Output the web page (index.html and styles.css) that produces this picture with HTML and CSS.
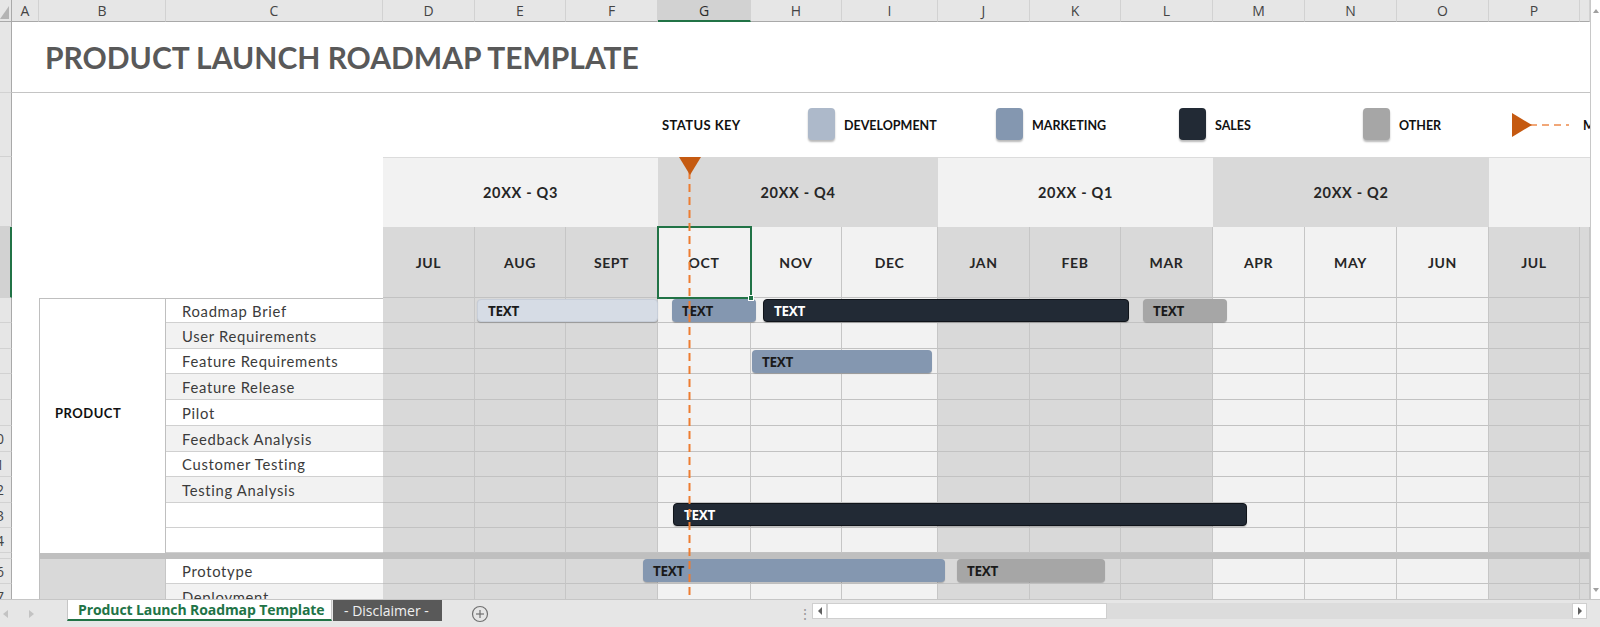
FILE: index.html
```html
<!DOCTYPE html>
<html>
<head>
<meta charset="utf-8">
<title>Product Launch Roadmap Template</title>
<link rel="stylesheet" href="styles.css">
</head>
<body>
<div class="app">
  <div class="main">
    <div class="sheet">
      <div class="row hdr">
        <div class="corner"><svg width="11" height="21" viewBox="0 0 11 21"><polygon points="9,6 9,19 0,19" fill="#b4b4b4"/></svg></div>
        <div class="ch">A</div><div class="ch">B</div><div class="ch">C</div><div class="ch">D</div><div class="ch">E</div><div class="ch">F</div><div class="ch sel">G</div><div class="ch">H</div><div class="ch">I</div><div class="ch">J</div><div class="ch">K</div><div class="ch">L</div><div class="ch">M</div><div class="ch">N</div><div class="ch">O</div><div class="ch">P</div><div class="ch"></div>
      </div>

      <div class="row r-title">
        <div class="rh"><span>1</span></div>
        <div class="title-cell"><h1 class="title">PRODUCT LAUNCH ROADMAP TEMPLATE</h1></div>
      </div>

      <div class="row r-status">
        <div class="rh"><span>2</span></div>
        <div class="blank span-af"></div>
        <div class="sk">STATUS KEY</div>
        <div class="sw-cell"><span class="sw sw-dev"></span></div>
        <div class="lbl">DEVELOPMENT</div>
        <div class="sw-cell"><span class="sw sw-mkt"></span></div>
        <div class="lbl">MARKETING</div>
        <div class="sw-cell"><span class="sw sw-sales"></span></div>
        <div class="lbl">SALES</div>
        <div class="sw-cell"><span class="sw sw-other"></span></div>
        <div class="lbl">OTHER</div>
        <div class="ms-cell"><svg width="60" height="24" viewBox="0 0 60 24"><line x1="18" y1="12" x2="57" y2="12" stroke="#ed8a4c" stroke-width="1.5" stroke-dasharray="7 5"/><polygon points="0,0 20,12 0,24" fill="#c55a11"/></svg></div>
        <div class="lbl lbl-clip">MILESTONE</div>
      </div>

      <div class="row r-quarter">
        <div class="rh"><span>3</span></div>
        <div class="blank span-ac"></div>
        <div class="q lt span3">20XX - Q3</div>
        <div class="q dk span3">20XX - Q4</div>
        <div class="q lt span3">20XX - Q1</div>
        <div class="q dk span3">20XX - Q2</div>
        <div class="q lt span2"></div>
      </div>

      <div class="row r-month">
        <div class="rh rh-sel"><span>4</span></div>
        <div class="blank span-ac"></div>
        <div class="mh dk">JUL</div><div class="mh dk">AUG</div><div class="mh dk">SEPT</div>
        <div class="mh lt">OCT</div><div class="mh lt">NOV</div><div class="mh lt">DEC</div>
        <div class="mh dk">JAN</div><div class="mh dk">FEB</div><div class="mh dk">MAR</div>
        <div class="mh lt">APR</div><div class="mh lt">MAY</div><div class="mh lt">JUN</div>
        <div class="mh dk">JUL</div><div class="mh dk"></div>
      </div>

      <div class="row h25">
        <div class="rh"><span>5</span></div><div class="ca"></div><div class="cb top"></div><div class="cc top">Roadmap Brief</div>
        <i class="m dk"></i><i class="m dk"></i><i class="m dk"></i><i class="m lt"></i><i class="m lt"></i><i class="m lt"></i><i class="m dk"></i><i class="m dk"></i><i class="m dk"></i><i class="m lt"></i><i class="m lt"></i><i class="m lt"></i><i class="m dk"></i><i class="m dk"></i>
      </div>
      <div class="row h26">
        <div class="rh"><span>6</span></div><div class="ca"></div><div class="cb"></div><div class="cc alt">User Requirements</div>
        <i class="m dk"></i><i class="m dk"></i><i class="m dk"></i><i class="m lt"></i><i class="m lt"></i><i class="m lt"></i><i class="m dk"></i><i class="m dk"></i><i class="m dk"></i><i class="m lt"></i><i class="m lt"></i><i class="m lt"></i><i class="m dk"></i><i class="m dk"></i>
      </div>
      <div class="row h25">
        <div class="rh"><span>7</span></div><div class="ca"></div><div class="cb"></div><div class="cc">Feature Requirements</div>
        <i class="m dk"></i><i class="m dk"></i><i class="m dk"></i><i class="m lt"></i><i class="m lt"></i><i class="m lt"></i><i class="m dk"></i><i class="m dk"></i><i class="m dk"></i><i class="m lt"></i><i class="m lt"></i><i class="m lt"></i><i class="m dk"></i><i class="m dk"></i>
      </div>
      <div class="row h26">
        <div class="rh"><span>8</span></div><div class="ca"></div><div class="cb"></div><div class="cc alt">Feature Release</div>
        <i class="m dk"></i><i class="m dk"></i><i class="m dk"></i><i class="m lt"></i><i class="m lt"></i><i class="m lt"></i><i class="m dk"></i><i class="m dk"></i><i class="m dk"></i><i class="m lt"></i><i class="m lt"></i><i class="m lt"></i><i class="m dk"></i><i class="m dk"></i>
      </div>
      <div class="row h26">
        <div class="rh"><span>9</span></div><div class="ca"></div><div class="cb group">PRODUCT</div><div class="cc">Pilot</div>
        <i class="m dk"></i><i class="m dk"></i><i class="m dk"></i><i class="m lt"></i><i class="m lt"></i><i class="m lt"></i><i class="m dk"></i><i class="m dk"></i><i class="m dk"></i><i class="m lt"></i><i class="m lt"></i><i class="m lt"></i><i class="m dk"></i><i class="m dk"></i>
      </div>
      <div class="row h26">
        <div class="rh"><span>10</span></div><div class="ca"></div><div class="cb"></div><div class="cc alt">Feedback Analysis</div>
        <i class="m dk"></i><i class="m dk"></i><i class="m dk"></i><i class="m lt"></i><i class="m lt"></i><i class="m lt"></i><i class="m dk"></i><i class="m dk"></i><i class="m dk"></i><i class="m lt"></i><i class="m lt"></i><i class="m lt"></i><i class="m dk"></i><i class="m dk"></i>
      </div>
      <div class="row h25">
        <div class="rh"><span>11</span></div><div class="ca"></div><div class="cb"></div><div class="cc">Customer Testing</div>
        <i class="m dk"></i><i class="m dk"></i><i class="m dk"></i><i class="m lt"></i><i class="m lt"></i><i class="m lt"></i><i class="m dk"></i><i class="m dk"></i><i class="m dk"></i><i class="m lt"></i><i class="m lt"></i><i class="m lt"></i><i class="m dk"></i><i class="m dk"></i>
      </div>
      <div class="row h26">
        <div class="rh"><span>12</span></div><div class="ca"></div><div class="cb"></div><div class="cc alt">Testing Analysis</div>
        <i class="m dk"></i><i class="m dk"></i><i class="m dk"></i><i class="m lt"></i><i class="m lt"></i><i class="m lt"></i><i class="m dk"></i><i class="m dk"></i><i class="m dk"></i><i class="m lt"></i><i class="m lt"></i><i class="m lt"></i><i class="m dk"></i><i class="m dk"></i>
      </div>
      <div class="row h25">
        <div class="rh"><span>13</span></div><div class="ca"></div><div class="cb"></div><div class="cc"></div>
        <i class="m dk"></i><i class="m dk"></i><i class="m dk"></i><i class="m lt"></i><i class="m lt"></i><i class="m lt"></i><i class="m dk"></i><i class="m dk"></i><i class="m dk"></i><i class="m lt"></i><i class="m lt"></i><i class="m lt"></i><i class="m dk"></i><i class="m dk"></i>
      </div>
      <div class="row h25">
        <div class="rh"><span>14</span></div><div class="ca"></div><div class="cb"></div><div class="cc"></div>
        <i class="m dk"></i><i class="m dk"></i><i class="m dk"></i><i class="m lt"></i><i class="m lt"></i><i class="m lt"></i><i class="m dk"></i><i class="m dk"></i><i class="m dk"></i><i class="m lt"></i><i class="m lt"></i><i class="m lt"></i><i class="m dk"></i><i class="m dk"></i>
      </div>
      <div class="row h6">
        <div class="rh"><span></span></div><div class="ca"></div><div class="sep"></div>
      </div>
      <div class="row h25">
        <div class="rh"><span>16</span></div><div class="ca"></div><div class="cb gray"></div><div class="cc">Prototype</div>
        <i class="m dk"></i><i class="m dk"></i><i class="m dk"></i><i class="m lt"></i><i class="m lt"></i><i class="m lt"></i><i class="m dk"></i><i class="m dk"></i><i class="m dk"></i><i class="m lt"></i><i class="m lt"></i><i class="m lt"></i><i class="m dk"></i><i class="m dk"></i>
      </div>
      <div class="row h26">
        <div class="rh"><span>17</span></div><div class="ca"></div><div class="cb gray"></div><div class="cc alt">Deployment</div>
        <i class="m dk"></i><i class="m dk"></i><i class="m dk"></i><i class="m lt"></i><i class="m lt"></i><i class="m lt"></i><i class="m dk"></i><i class="m dk"></i><i class="m dk"></i><i class="m lt"></i><i class="m lt"></i><i class="m lt"></i><i class="m dk"></i><i class="m dk"></i>
      </div>

      <div class="overlay">
        <div class="bar dev" style="left:477px;top:299px;width:181px">TEXT</div>
        <div class="bar mkt" style="left:672px;top:299px;width:84px">TEXT</div>
        <div class="bar sales" style="left:763px;top:299px;width:366px">TEXT</div>
        <div class="bar other" style="left:1143px;top:299px;width:84px">TEXT</div>
        <div class="bar mkt" style="left:752px;top:350px;width:180px">TEXT</div>
        <div class="bar sales" style="left:673px;top:503px;width:574px">TEXT</div>
        <div class="bar mkt" style="left:643px;top:559px;width:302px">TEXT</div>
        <div class="bar other" style="left:957px;top:559px;width:148px">TEXT</div>
        <div class="selbox"><i class="handle"></i></div>
        <svg class="milestone" width="24" height="442" viewBox="0 0 24 442"><line x1="11.5" y1="14" x2="11.5" y2="442" stroke="#ed7d31" stroke-width="2" stroke-dasharray="8 5"/><polygon points="1,0 23,0 12,18" fill="#c55a11"/></svg>
      </div>
    </div>
    <div class="vscroll">
      <svg class="vs-up" width="10" height="10" viewBox="0 0 10 10"><polygon points="5,3 8,7 2,7" fill="#a0a0a0"/></svg>
      <svg class="vs-down" width="10" height="10" viewBox="0 0 10 10"><polygon points="5,7 8,3 2,3" fill="#a0a0a0"/></svg>
    </div>
  </div>

  <div class="tabbar">
    <div class="tabnav">
      <svg width="8" height="10" viewBox="0 0 8 10"><polygon points="6,1 6,9 1,5" fill="#c3c3c3"/></svg>
      <svg width="8" height="10" viewBox="0 0 8 10"><polygon points="2,1 2,9 7,5" fill="#c3c3c3"/></svg>
    </div>
    <div class="tab tab-active">Product Launch Roadmap Template</div>
    <div class="tab tab-dark">- Disclaimer -</div>
    <div class="addsheet"><svg width="18" height="18" viewBox="0 0 18 18"><circle cx="9" cy="9" r="7.5" fill="none" stroke="#707070" stroke-width="1.2"/><line x1="9" y1="5" x2="9" y2="13" stroke="#707070" stroke-width="1.2"/><line x1="5" y1="9" x2="13" y2="9" stroke="#707070" stroke-width="1.2"/></svg></div>
    <div class="tabspace"></div>
    <div class="dots">⋮</div>
    <div class="hscroll">
      <div class="hs-btn"><svg width="6" height="8" viewBox="0 0 6 8"><polygon points="5,0 5,8 1,4" fill="#606060"/></svg></div>
      <div class="hs-thumb"></div>
      <div class="hs-track"></div>
      <div class="hs-btn"><svg width="6" height="8" viewBox="0 0 6 8"><polygon points="1,0 1,8 5,4" fill="#606060"/></svg></div>
    </div>
  </div>
</div>
</body>
</html>
```

FILE: styles.css
```css
* { box-sizing: border-box; margin: 0; padding: 0; }
html, body { width: 1600px; height: 627px; overflow: hidden; background: #fff; }
body { font-family: "Lato", "Open Sans", sans-serif; color: #262626; }

.app { width: 1600px; height: 627px; display: flex; flex-direction: column; }
.main { display: flex; height: 599px; }
.sheet { position: relative; width: 1590px; height: 599px; overflow: hidden; }

.row {
  display: grid;
  grid-template-columns: 12px 27px 127px 217px 92px 91px 92px 93px 91px 96px 92px 91px 92px 92px 92px 92px 91px 10px;
}
.hdr { height: 22px; }
.r-title { height: 71px; }
.r-status { height: 64px; }
.r-quarter { height: 70px; }
.r-month { height: 71px; }
.h25 { height: 25px; }
.h26 { height: 26px; }
.h6 { height: 6px; }

/* column headers */
.corner { background: #e6e6e6; border-right: 1px solid #a9a9a9; border-bottom: 1px solid #a9a9a9; display: flex; align-items: flex-end; }
.ch {
  background: #e6e6e6; border-right: 1px solid #d2d2d2; border-bottom: 1px solid #a9a9a9;
  display: flex; align-items: center; justify-content: center;
  font: 14px "Open Sans", sans-serif; color: #444;
}
.ch.sel { background: #d2d2d2; border-bottom: 2px solid #217346; color: #2b2b2b; }

/* row headers */
.rh {
  background: #e6e6e6; border-right: 1px solid #a9a9a9; border-bottom: 1px solid #d2d2d2;
  overflow: hidden; display: flex; align-items: center;
  font: 14px "Open Sans", sans-serif; color: #444;
}
.rh span { display: block; flex: none; width: 30px; margin-left: -19px; text-align: center; white-space: nowrap; }
.rh-sel { background: #d2d2d2; border-right: 2px solid #217346; }

/* title */
.title-cell { grid-column: 2 / -1; border-bottom: 1px solid #c4c4c4; display: flex; align-items: center; padding-left: 33px; }
.title { font: 700 30px "Lato", sans-serif; color: #595959; letter-spacing: 0; }

/* status key */
.span-af { grid-column: 2 / 8; }
.span-ac { grid-column: 2 / 5; }
.sk { display: flex; align-items: center; padding-left: 4px; font: 700 13px "Lato", sans-serif; letter-spacing: 0.4px; color: #111; white-space: nowrap; }
.sw-cell { display: flex; align-items: center; justify-content: flex-end; padding-right: 7px; }
.sw { display: block; width: 27px; height: 32px; border-radius: 4px; box-shadow: 0 2px 2px rgba(0,0,0,0.28); margin-top: -2px; }
.sw-dev { background: #adb9ca; }
.sw-mkt { background: #8497b0; }
.sw-sales { background: #222a35; }
.sw-other { background: #a6a6a6; }
.lbl { display: flex; align-items: center; padding-left: 2px; font: 700 12.5px "Lato", sans-serif; letter-spacing: 0; color: #111; white-space: nowrap; }
.lbl-clip { overflow: hidden; padding-left: 3px; }
.ms-cell { display: flex; align-items: center; padding-left: 23px; }

/* quarters & months */
.q { display: flex; align-items: center; justify-content: center; font: 700 14.5px "Lato", sans-serif; letter-spacing: 0.7px; color: #262626; }
.q.lt { border-top: 1px solid #dcdcdc; }
.span3 { grid-column: span 3; }
.span2 { grid-column: span 2; }
.dk { background: #d9d9d9; }
.lt { background: #f2f2f2; }
.mh {
  display: flex; align-items: center; justify-content: center;
  border-right: 1px solid #c6c6c6; border-bottom: 1px solid #c2c2c2;
  font: 700 14px "Lato", sans-serif; letter-spacing: 0.6px; color: #262626;
}
.m { display: block; border-right: 1px solid #c6c6c6; border-bottom: 1px solid #c2c2c2; }

/* task block */
.ca { background: #fff; }
.cb { background: #fff; border-left: 1px solid #bfbfbf; border-right: 1px solid #bfbfbf; }
.cb.gray { background: #d9d9d9; border-right-color: #c6c6c6; }
.cb.group { display: flex; align-items: center; padding-left: 15px; font: 700 13px "Lato", sans-serif; letter-spacing: 0.5px; color: #111; }
.cc {
  background: #fff; border-bottom: 1px solid #d0d0d0;
  display: flex; align-items: center; padding-left: 16px;
  font: 400 14.8px "Lato", sans-serif; letter-spacing: 0.7px; color: #3b3b3b; white-space: nowrap;
}
.cc.alt { background: #f2f2f2; }
.top { border-top: 1px solid #bfbfbf; }
.sep { grid-column: 3 / -1; background: #bfbfbf; }

/* overlay shapes */
.overlay { position: absolute; left: 0; top: 0; width: 1590px; height: 599px; pointer-events: none; }
.bar {
  position: absolute; height: 23px; border-radius: 4px;
  display: flex; align-items: center; padding-left: 10px;
  font: 700 13.5px "Open Sans", sans-serif; letter-spacing: -0.3px; color: #1a1a1a;
  box-shadow: 0 1px 1px rgba(0,0,0,0.22);
}
.bar.dev { background: #d6dce5; border: 1px solid #c7ced9; }
.bar.mkt { background: #8497b0; }
.bar.sales { background: #222a35; color: #fff; border: 1px solid #10141a; }
.bar.other { background: #a6a6a6; }
.selbox { position: absolute; left: 657px; top: 226px; width: 95px; height: 73px; border: 2px solid #217346; }
.handle { position: absolute; right: -4px; bottom: -4px; width: 6px; height: 6px; background: #217346; border: 1px solid #fff; }
.milestone { position: absolute; left: 678px; top: 157px; }

/* vertical scrollbar */
.vscroll { width: 10px; height: 599px; background: #fff; border-left: 1px solid #c8c8c8; position: relative; display: flex; flex-direction: column; justify-content: space-between; padding: 6px 0 4px; }

/* sheet tabs */
.tabbar { height: 28px; background: #e6e6e6; border-top: 1px solid #c6c6c6; display: flex; align-items: flex-start; font-family: "Open Sans", sans-serif; }
.tabnav { width: 67px; height: 27px; display: flex; align-items: center; gap: 17px; padding-left: 2px; }
.tab { height: 21px; display: flex; align-items: center; white-space: nowrap; font-size: 14px; overflow: hidden; }
.tab-active { width: 265px; background: #fff; color: #217346; font-weight: 700; padding-left: 10px; letter-spacing: -0.1px; border-bottom: 2px solid #217346; border-left: 1px solid #c6c6c6; border-right: 1px solid #c6c6c6; }
.tab-dark { width: 109px; margin-left: 1px; background: #595959; color: #f0f0f0; padding-left: 11px; }
.addsheet { width: 18px; height: 27px; margin-left: 29px; display: flex; align-items: center; }
.tabspace { flex: 1; }
.dots { width: 15px; height: 27px; display: flex; align-items: center; justify-content: center; color: #9a9a9a; font-size: 14px; }
.hscroll { width: 775px; height: 16px; margin: 3px 13px 0 0; display: flex; background: #dcdcdc; }
.hs-btn { width: 15px; height: 16px; background: #fff; border: 1px solid #cfcfcf; display: flex; align-items: center; justify-content: center; }
.hs-thumb { width: 280px; height: 16px; background: #fff; border: 1px solid #cfcfcf; }
.hs-track { flex: 1; }
```
